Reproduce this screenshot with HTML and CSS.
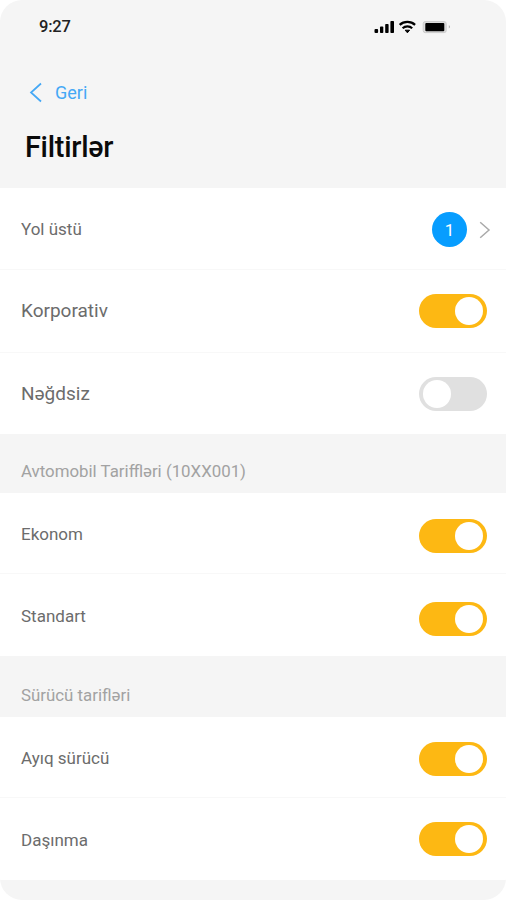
FILE: index.html
```html
<!DOCTYPE html>
<html lang="az">
<head>
<meta charset="utf-8">
<title>Filtirlər</title>
<link rel="stylesheet" href="styles.css">
</head>
<body>
<main class="screen">
  <header class="header">
    <div class="status">
      <span class="time">9:27</span>
      <svg class="status-icons" width="78" height="16" viewBox="0 0 78 16">
        <g fill="#000">
          <rect x="0.500" y="9" width="3.6" height="4" rx="1"/>
          <rect x="6" y="6.6" width="3.3" height="6.4" rx=".8"/>
          <rect x="11.2" y="4" width="3.4" height="9" rx=".8"/>
          <rect x="16.4" y="1" width="3.6" height="12" rx=".8"/>
          <path d="M31.200 10.200h4.400l-2.200 2.600z" stroke="#000" stroke-linejoin="round" stroke-width="1"/>
        </g>
        <g fill="none" stroke="#000" stroke-width="2.200">
          <path d="M25.700 4.900c4.200-4 11.200-4 15.400 0"/>
          <path d="M28.600 8.200c2.600-2.400 7-2.400 9.600 0"/>
        </g>
        <rect x="49.2" y="1.6" width="23" height="11" rx="2" fill="#ddd" stroke="#ccc" stroke-width="1"/>
        <rect x="51.3" y="3" width="19" height="8.3" rx="1" fill="#000"/>
        <path d="M74.8 5.3v3.2c1.6-.4 1.6-2.8 0-3.2z" fill="#b0b0b0"/>
      </svg>
    </div>
    <a class="back">
      <svg width="14" height="22" viewBox="0 0 14 22"><path d="M13 1.500L3 10.500 13 19.500" fill="none" stroke="#45a8f5" stroke-width="1.7"/></svg>
      <span class="back-label">Geri</span>
    </a>
    <h1 class="title">Filtirlər</h1>
  </header>
  <section class="list">
    <div class="row way">
      <span class="label">Yol üstü</span>
      <span class="more"><b class="count">1</b><svg width="12" height="18" viewBox="0 0 12 18"><path d="M1.2 1.3L10 9l-8.800 7.700" fill="none" stroke="#aaa" stroke-width="1.5"/></svg></span>
    </div>
    <div class="row corporate"><span class="label">Korporativ</span><i class="toggle on"></i></div>
    <div class="row cashless"><span class="label">Nəğdsiz</span><i class="toggle"></i></div>
  </section>
  <h2 class="group cars">Avtomobil Tariffləri (10XX001)</h2>
  <section class="list">
    <div class="row economy"><span class="label">Ekonom</span><i class="toggle on"></i></div>
    <div class="row standard"><span class="label">Standart</span><i class="toggle on"></i></div>
  </section>
  <h2 class="group drivers">Sürücü tarifləri</h2>
  <section class="list">
    <div class="row sober"><span class="label">Ayıq sürücü</span><i class="toggle on"></i></div>
    <div class="row moving"><span class="label">Daşınma</span><i class="toggle on"></i></div>
  </section>
</main>
</body>
</html>
```
FILE: styles.css
```css
* { box-sizing: border-box; }
body { margin: 0; background: #fff; font-family: Roboto, "Liberation Sans", sans-serif; }
.screen { width: 506px; height: 900px; background: #f5f5f5; border-radius: 22px; overflow: hidden; }
.header { height: 188px; }
.status { display: flex; justify-content: space-between; align-items: flex-start; height: 82px; padding: 17px 54px 0 39px; }
.time { font-size: 16.500px; line-height: 20px; font-weight: 500; letter-spacing: -.2px; color: #222; }
.status-icons { margin-top: 3px; }
.back { display: flex; align-items: center; gap: 13px; height: 22px; padding-left: 28px; color: #45a8f5; }
.back-label { font-size: 18px; line-height: 22px; }
.title { margin: 25px 0 0 25px; font-size: 28.800px; line-height: 36px; font-weight: 500; letter-spacing: -.25px; color: #0a0a0a; }
.list { background: #fff; }
.row { display: flex; justify-content: space-between; align-items: flex-start; padding: 0 19px 0 21px; height: 82px; border-bottom: 1px solid #f8f8f8; }
.row:last-child { border-bottom: 0; }
.label { margin-top: 29px; font-size: 17px; line-height: 24px; color: #6c6c6c; }
.toggle { display: flex; width: 68px; height: 34px; margin-top: 25px; padding: 3px 4px; border-radius: 17px; background: #e0e0e0; }
.toggle::before { content: ""; width: 28px; height: 28px; border-radius: 50%; background: #fff; }
.on { justify-content: flex-end; background: #fdb813; }
.more { display: flex; align-items: center; gap: 12px; margin: 24px -4px 0 0; }
.count { width: 35px; height: 35px; border-radius: 50%; background: #079dff; color: #fff; font-size: 17px; line-height: 37px; font-weight: 400; text-align: center; }
.group { margin: 0; padding-left: 21px; font-weight: 400; font-size: 16.850px; color: #a2a2a2; line-height: 24px; }
.corporate { height: 83px; }
.corporate .label, .cashless .label { font-size: 19px; }
.corporate .toggle { margin-top: 23.500px; }
.cashless { height: 81px; }
.cashless .toggle { margin-top: 24px; }
.cars { height: 59px; padding-top: 25px; }
.economy { height: 81px; }
.economy .toggle { margin-top: 25.500px; }
.standard .label, .moving .label { margin-top: 30px; }
.standard .toggle { margin-top: 28px; }
.drivers { height: 61px; padding-top: 27px; }
.sober { height: 81px; }
.sober .toggle { margin-top: 24.500px; }
.moving .toggle { margin-top: 24px; }
```
